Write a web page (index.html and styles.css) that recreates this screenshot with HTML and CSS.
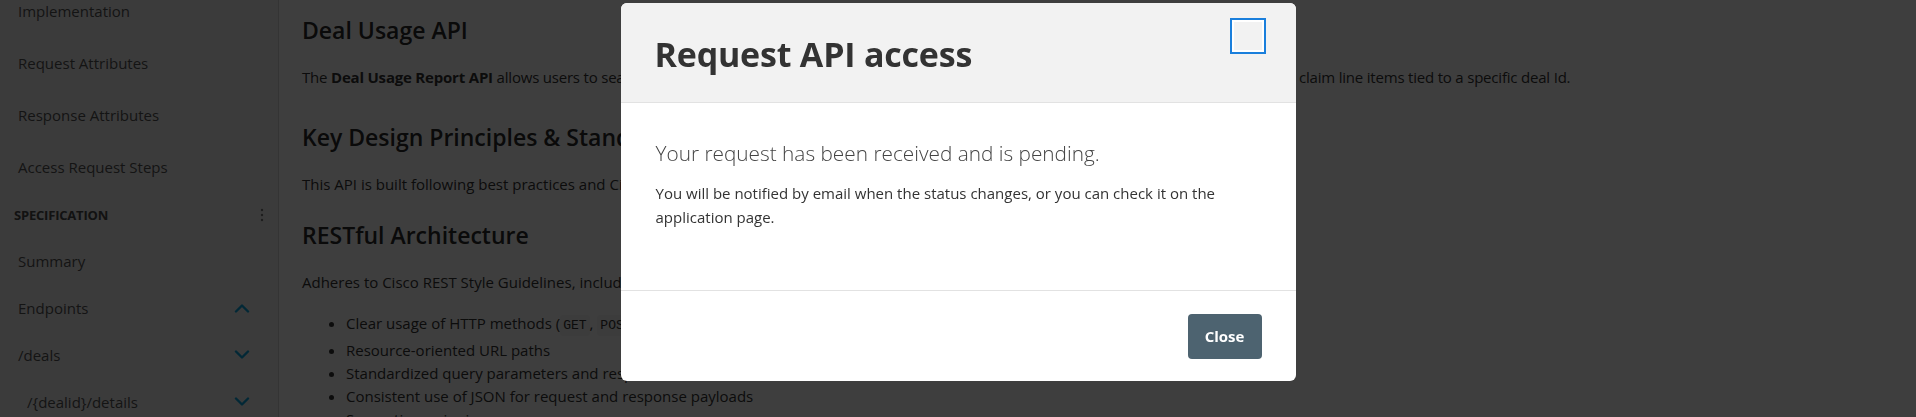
FILE: index.html
```html
<!DOCTYPE html>
<html lang="en">
<head>
<meta charset="utf-8">
<title>Deal Usage API</title>
<link rel="stylesheet" href="styles.css">
</head>
<body>
<div class="app">
  <aside class="sidebar">
    <ul class="nav nav-guide">
      <li class="nav-item">Implementation</li>
      <li class="nav-item">Request Attributes</li>
      <li class="nav-item">Response Attributes</li>
      <li class="nav-item">Access Request Steps</li>
    </ul>
    <div class="nav-section">
      <span>SPECIFICATION</span>
      <svg class="kebab" width="4" height="14" viewBox="0 0 4 14"><circle cx="2" cy="2" r="1.2"/><circle cx="2" cy="7" r="1.2"/><circle cx="2" cy="12" r="1.2"/></svg>
    </div>
    <ul class="nav nav-spec">
      <li class="nav-item">Summary</li>
      <li class="nav-item">Endpoints
        <svg class="chev" width="16" height="10" viewBox="0 0 16 10"><path d="M2 8.5 L8 2.5 L14 8.5"/></svg>
      </li>
      <li class="nav-item">/deals
        <svg class="chev" width="16" height="10" viewBox="0 0 16 10"><path d="M2 1.5 L8 7.5 L14 1.5"/></svg>
      </li>
      <li class="nav-item nav-sub">/{dealid}/details
        <svg class="chev" width="16" height="10" viewBox="0 0 16 10"><path d="M2 1.5 L8 7.5 L14 1.5"/></svg>
      </li>
    </ul>
  </aside>
  <main class="content">
    <section class="intro">
      <h2>Deal Usage API</h2>
      <p class="summary">The <strong>Deal Usage Report API</strong> allows users to search for and retrieve the deal usage reports giving the full consumption details of all the booked and claim line items tied to a specific deal Id.</p>
    </section>
    <h2>Key Design Principles &amp; Standards</h2>
    <p>This API is built following best practices and Cisco API design standards.</p>
    <h2>RESTful Architecture</h2>
    <p>Adheres to Cisco REST Style Guidelines, including:</p>
    <ul class="bullets">
      <li>Clear usage of HTTP methods (<code>GET</code>, <code>POST</code>)</li>
      <li>Resource-oriented URL paths</li>
      <li>Standardized query parameters and response formats</li>
      <li>Consistent use of JSON for request and response payloads</li>
      <li>Semantic versioning</li>
    </ul>
  </main>
</div>

<div class="backdrop"></div>

<div class="modal-wrap">
  <div class="modal" role="dialog" aria-labelledby="modal-title">
    <div class="modal-header">
      <h1 id="modal-title" class="modal-title">Request API access</h1>
      <button class="modal-x" aria-label="Close dialog"></button>
    </div>
    <div class="modal-body">
      <p class="modal-lead">Your request has been received and is pending.</p>
      <p class="modal-text">You will be notified by email when the status changes, or you can check it on the application page.</p>
    </div>
    <div class="modal-footer">
      <button class="btn-close">Close</button>
    </div>
  </div>
</div>
</body>
</html>
```

FILE: styles.css
```css
* { box-sizing: border-box; }

html, body {
  margin: 0;
  height: 100%;
  overflow: hidden;
}

body {
  font-family: "Open Sans", "Noto Sans", sans-serif;
  background: #fff;
  color: #333;
}

.app {
  display: flex;
  height: 100%;
}

/* Sidebar */
.sidebar {
  width: 279px;
  flex: none;
  background: #f2f2f2;
  border-right: 1px solid #d4d4d4;
  overflow: hidden;
}

.nav {
  list-style: none;
  margin: 0;
  padding: 0;
}

.nav-guide {
  margin-top: -15px;
}

.nav-item {
  display: flex;
  align-items: center;
  justify-content: space-between;
  font-size: 15px;
  color: #555;
  padding: 0 28px 0 18px;
}

.nav-guide .nav-item {
  height: 52px;
}

.nav-spec .nav-item {
  height: 47px;
}

.nav-spec .nav-sub {
  padding-left: 27px;
}

.nav-section {
  height: 44px;
  display: flex;
  align-items: center;
  justify-content: space-between;
  padding: 0 14px;
  font-size: 13px;
  font-weight: 700;
  color: #4a4a4a;
  letter-spacing: -0.2px;
}

.kebab circle { fill: #7a7a7a; }

.chev path {
  fill: none;
  stroke: #0aa5dc;
  stroke-width: 2.4;
  stroke-linecap: round;
  stroke-linejoin: round;
}

/* Main content */
.content {
  flex: 1;
  display: flex;
  flex-direction: column;
  align-items: flex-start;
  padding: 14px 24px 0 23px;
  overflow: hidden;
  white-space: nowrap;
}

.intro {
  display: flex;
  flex-direction: column;
  align-items: flex-start;
  margin-bottom: 9px;
}

.content h2 {
  font-size: 23px;
  font-weight: 600;
  line-height: 32px;
  color: #2a2a2a;
  margin: 6px 0 20px;
}

.content .intro h2 {
  margin-top: 0;
}

.content p {
  font-size: 15px;
  line-height: 22px;
  margin: 0 0 18px;
  color: #333;
}

.content .summary {
  letter-spacing: -0.2px;
}

.content strong {
  font-weight: 700;
}

.bullets {
  margin: -1px 0 0;
  padding-left: 44px;
  font-size: 15px;
  color: #333;
}

.bullets li {
  line-height: 23px;
}

.bullets li:first-child {
  line-height: 26px;
}

.bullets code {
  font-family: "Liberation Mono", monospace;
  font-size: 13px;
  background: #f4f4f4;
  border-radius: 3px;
  padding: 3px 3px;
}

/* Modal */
.backdrop {
  position: fixed;
  inset: 0;
  background: rgba(0, 0, 0, 0.757);
}

.modal-wrap {
  position: fixed;
  inset: 0;
  display: flex;
  justify-content: center;
  align-items: flex-start;
  padding-top: 3px;
}

.modal {
  width: 675px;
  background: #fff;
  border-radius: 6px;
  overflow: hidden;
}

.modal-header {
  height: 100px;
  background: #f2f2f2;
  border-bottom: 1px solid #e2e2e2;
  display: flex;
  align-items: flex-start;
  justify-content: space-between;
  padding: 17px 32px 0 34px;
}

.modal-title {
  margin: 14px 0 0;
  font-size: 34px;
  line-height: 40px;
  font-weight: 700;
  color: #333;
  letter-spacing: -0.2px;
}

.modal-x {
  width: 32px;
  height: 32px;
  padding: 0;
  border: none;
  background: #f2f2f2;
  box-shadow: inset 0 0 0 2px #fff, 0 0 0 2px #1a7fdc;
}

.modal-body {
  padding: 36px 35px 61px;
  border-bottom: 1px solid #e2e2e2;
}

.modal-lead {
  margin: 0 0 14px;
  font-size: 20.8px;
  line-height: 28px;
  font-weight: 300;
  color: #444;
}

.modal-text {
  margin: 0;
  font-size: 15px;
  line-height: 24px;
  color: #333;
}

.modal-footer {
  height: 90px;
  display: flex;
  align-items: center;
  justify-content: flex-end;
  padding: 0 34px;
}

.btn-close {
  width: 74px;
  height: 45px;
  border: none;
  border-radius: 4px;
  background: #4d6370;
  color: #fff;
  font-family: "Open Sans", "Noto Sans", sans-serif;
  font-size: 15px;
  font-weight: 700;
}
```
